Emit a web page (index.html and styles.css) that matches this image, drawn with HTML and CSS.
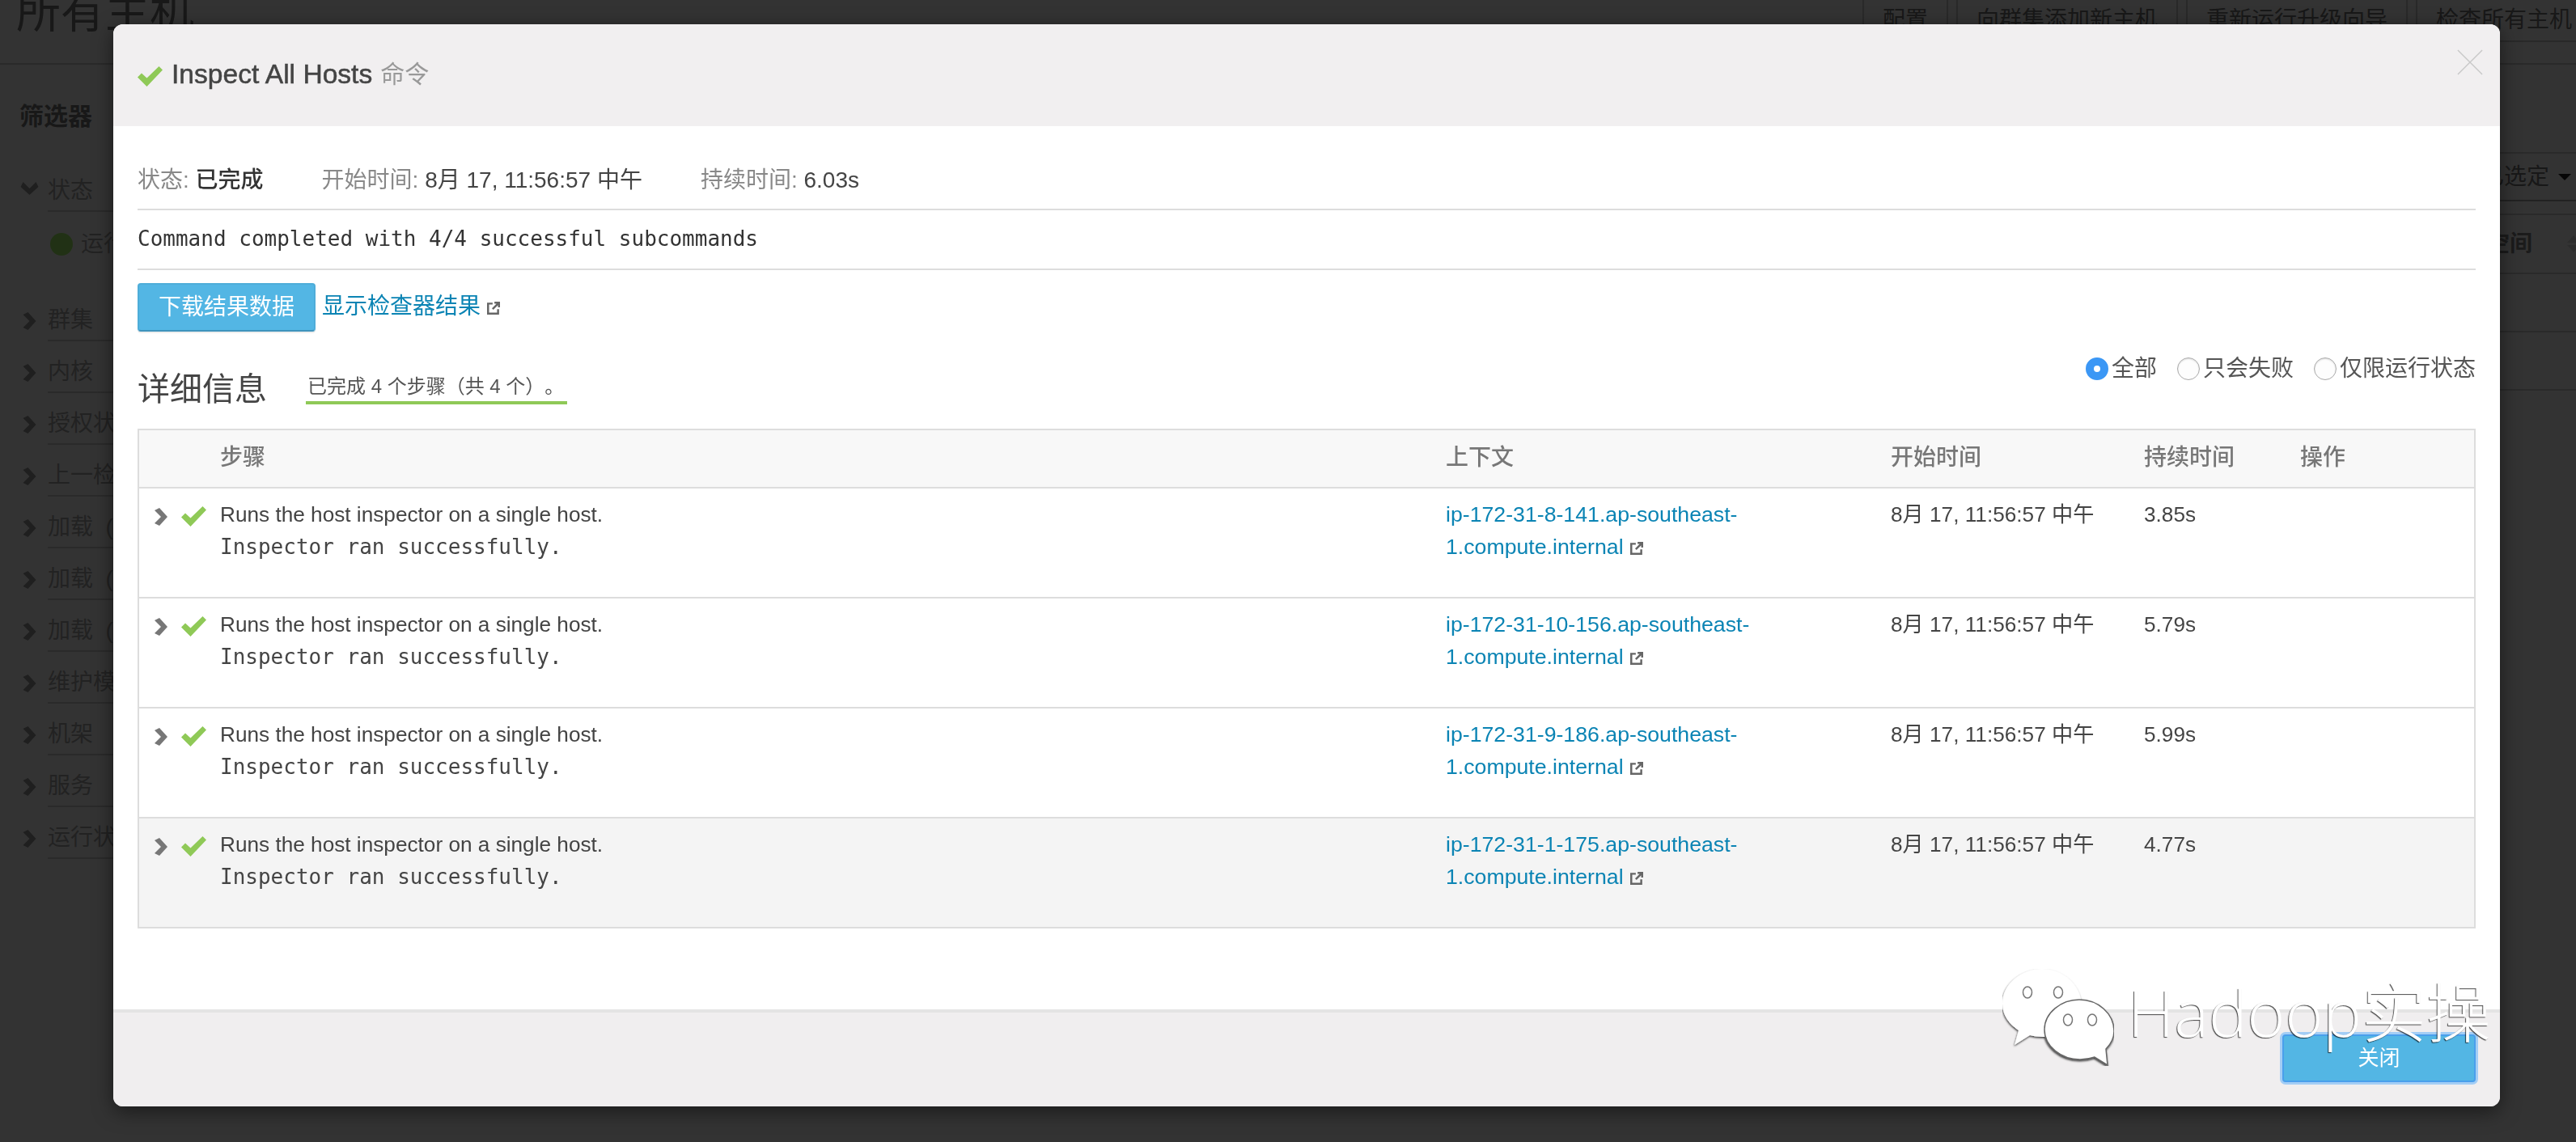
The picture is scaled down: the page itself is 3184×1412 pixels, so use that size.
FILE: index.html
```html
<!DOCTYPE html>
<html lang="zh">
<head>
<meta charset="utf-8">
<title>Inspect All Hosts</title>
<link rel="stylesheet" href="styles.css">
</head>
<body>
<div class="page">
  <header class="page-head">
    <h1 class="page-title">所有主机</h1>
    <nav class="page-actions">
      <span class="page-btn">配置</span>
      <span class="page-btn">向群集添加新主机</span>
      <span class="page-btn">重新运行升级向导</span>
      <span class="page-btn">检查所有主机</span>
    </nav>
  </header>
  <div class="page-body">
    <aside class="filters">
      <h2 class="filters-title">筛选器</h2>
      <div class="filter"><svg class="chev chev-down" viewBox="0 0 16 22"><path d="M0 3 L6 0 L16 11 L6 22 L0 19 L8 11 Z"/></svg><span class="filter-name">状态</span></div>
      <div class="filter-item"><span class="dot"></span>运行</div>
      <div class="filter"><svg class="chev" viewBox="0 0 16 22"><path d="M0 3 L6 0 L16 11 L6 22 L0 19 L8 11 Z"/></svg><span class="filter-name">群集</span></div>
      <div class="filter"><svg class="chev" viewBox="0 0 16 22"><path d="M0 3 L6 0 L16 11 L6 22 L0 19 L8 11 Z"/></svg><span class="filter-name">内核</span></div>
      <div class="filter"><svg class="chev" viewBox="0 0 16 22"><path d="M0 3 L6 0 L16 11 L6 22 L0 19 L8 11 Z"/></svg><span class="filter-name">授权状态</span></div>
      <div class="filter"><svg class="chev" viewBox="0 0 16 22"><path d="M0 3 L6 0 L16 11 L6 22 L0 19 L8 11 Z"/></svg><span class="filter-name">上一检查</span></div>
      <div class="filter"><svg class="chev" viewBox="0 0 16 22"><path d="M0 3 L6 0 L16 11 L6 22 L0 19 L8 11 Z"/></svg><span class="filter-name">加载&nbsp;&nbsp;(</span></div>
      <div class="filter"><svg class="chev" viewBox="0 0 16 22"><path d="M0 3 L6 0 L16 11 L6 22 L0 19 L8 11 Z"/></svg><span class="filter-name">加载&nbsp;&nbsp;(</span></div>
      <div class="filter"><svg class="chev" viewBox="0 0 16 22"><path d="M0 3 L6 0 L16 11 L6 22 L0 19 L8 11 Z"/></svg><span class="filter-name">加载&nbsp;&nbsp;(</span></div>
      <div class="filter"><svg class="chev" viewBox="0 0 16 22"><path d="M0 3 L6 0 L16 11 L6 22 L0 19 L8 11 Z"/></svg><span class="filter-name">维护模式</span></div>
      <div class="filter"><svg class="chev" viewBox="0 0 16 22"><path d="M0 3 L6 0 L16 11 L6 22 L0 19 L8 11 Z"/></svg><span class="filter-name">机架</span></div>
      <div class="filter"><svg class="chev" viewBox="0 0 16 22"><path d="M0 3 L6 0 L16 11 L6 22 L0 19 L8 11 Z"/></svg><span class="filter-name">服务</span></div>
      <div class="filter"><svg class="chev" viewBox="0 0 16 22"><path d="M0 3 L6 0 L16 11 L6 22 L0 19 L8 11 Z"/></svg><span class="filter-name">运行状况</span></div>
    </aside>
    <section class="host-side">
      <div class="host-tools">已选定<span class="caret"></span></div>
      <div class="host-cols">空间<span class="sort"><i class="sort-up"></i><i class="sort-down"></i></span></div>
      <div class="host-row"></div>
      <div class="host-row"></div>
      <div class="host-row"></div>
    </section>
  </div>
</div>

<div class="backdrop"></div>

<div class="modal">
  <div class="modal-head">
    <svg class="check check-title" viewBox="0 0 31 25"><path d="M0 13.5 L5 8.5 L11.5 14.5 L26.5 0 L31 4.5 L11.5 25 Z"/></svg>
    <span class="modal-title">Inspect All Hosts</span>
    <span class="modal-sub">命令</span>
    <svg class="modal-x" viewBox="0 0 34 34"><path d="M1 1 L33 33 M33 1 L1 33"/></svg>
  </div>
  <div class="modal-body">
    <div class="meta">
      <span class="meta-item"><span class="muted">状态:</span> <strong>已完成</strong></span>
      <span class="meta-item"><span class="muted">开始时间:</span> 8月 17, 11:56:57 中午</span>
      <span class="meta-item"><span class="muted">持续时间:</span> 6.03s</span>
    </div>
    <div class="result mono">Command completed with 4/4 successful subcommands</div>
    <div class="download">
      <span class="btn">下载结果数据</span>
      <a class="link link-big">显示检查器结果<svg class="ext" viewBox="0 0 16 16"><path d="M7 3 H2 V14 H13 V9 M9 2 H14 V7 M14 2 L7 9"/></svg></a>
    </div>
    <div class="details-bar">
      <h3 class="details-title">详细信息</h3>
      <span class="details-progress">已完成 4 个步骤（共 4 个）。</span>
      <div class="radios">
        <label class="radio"><span class="radio-dot radio-on"></span>全部</label>
        <label class="radio"><span class="radio-dot"></span>只会失败</label>
        <label class="radio"><span class="radio-dot"></span>仅限运行状态</label>
      </div>
    </div>
    <div class="steps">
      <div class="row row-head">
        <div class="c-icons"></div>
        <div class="c-step">步骤</div>
        <div class="c-ctx">上下文</div>
        <div class="c-start">开始时间</div>
        <div class="c-dur">持续时间</div>
        <div class="c-act">操作</div>
      </div>
      <div class="row">
        <div class="c-icons"><svg class="arrow" viewBox="0 0 16 22"><path d="M0 3 L6 0 L16 11 L6 22 L0 19 L8 11 Z"/></svg><svg class="check" viewBox="0 0 31 25"><path d="M0 13.5 L5 8.5 L11.5 14.5 L26.5 0 L31 4.5 L11.5 25 Z"/></svg></div>
        <div class="c-step"><div>Runs the host inspector on a single host.</div><div class="mono">Inspector ran successfully.</div></div>
        <div class="c-ctx"><a class="link">ip-172-31-8-141.ap-southeast-<br>1.compute.internal<svg class="ext" viewBox="0 0 16 16"><path d="M7 3 H2 V14 H13 V9 M9 2 H14 V7 M14 2 L7 9"/></svg></a></div>
        <div class="c-start">8月 17, 11:56:57 中午</div>
        <div class="c-dur">3.85s</div>
        <div class="c-act"></div>
      </div>
      <div class="row">
        <div class="c-icons"><svg class="arrow" viewBox="0 0 16 22"><path d="M0 3 L6 0 L16 11 L6 22 L0 19 L8 11 Z"/></svg><svg class="check" viewBox="0 0 31 25"><path d="M0 13.5 L5 8.5 L11.5 14.5 L26.5 0 L31 4.5 L11.5 25 Z"/></svg></div>
        <div class="c-step"><div>Runs the host inspector on a single host.</div><div class="mono">Inspector ran successfully.</div></div>
        <div class="c-ctx"><a class="link">ip-172-31-10-156.ap-southeast-<br>1.compute.internal<svg class="ext" viewBox="0 0 16 16"><path d="M7 3 H2 V14 H13 V9 M9 2 H14 V7 M14 2 L7 9"/></svg></a></div>
        <div class="c-start">8月 17, 11:56:57 中午</div>
        <div class="c-dur">5.79s</div>
        <div class="c-act"></div>
      </div>
      <div class="row">
        <div class="c-icons"><svg class="arrow" viewBox="0 0 16 22"><path d="M0 3 L6 0 L16 11 L6 22 L0 19 L8 11 Z"/></svg><svg class="check" viewBox="0 0 31 25"><path d="M0 13.5 L5 8.5 L11.5 14.5 L26.5 0 L31 4.5 L11.5 25 Z"/></svg></div>
        <div class="c-step"><div>Runs the host inspector on a single host.</div><div class="mono">Inspector ran successfully.</div></div>
        <div class="c-ctx"><a class="link">ip-172-31-9-186.ap-southeast-<br>1.compute.internal<svg class="ext" viewBox="0 0 16 16"><path d="M7 3 H2 V14 H13 V9 M9 2 H14 V7 M14 2 L7 9"/></svg></a></div>
        <div class="c-start">8月 17, 11:56:57 中午</div>
        <div class="c-dur">5.99s</div>
        <div class="c-act"></div>
      </div>
      <div class="row row-hover">
        <div class="c-icons"><svg class="arrow" viewBox="0 0 16 22"><path d="M0 3 L6 0 L16 11 L6 22 L0 19 L8 11 Z"/></svg><svg class="check" viewBox="0 0 31 25"><path d="M0 13.5 L5 8.5 L11.5 14.5 L26.5 0 L31 4.5 L11.5 25 Z"/></svg></div>
        <div class="c-step"><div>Runs the host inspector on a single host.</div><div class="mono">Inspector ran successfully.</div></div>
        <div class="c-ctx"><a class="link">ip-172-31-1-175.ap-southeast-<br>1.compute.internal<svg class="ext" viewBox="0 0 16 16"><path d="M7 3 H2 V14 H13 V9 M9 2 H14 V7 M14 2 L7 9"/></svg></a></div>
        <div class="c-start">8月 17, 11:56:57 中午</div>
        <div class="c-dur">4.77s</div>
        <div class="c-act"></div>
      </div>
    </div>
  </div>
  <div class="modal-foot"><span class="btn btn-close">关闭</span></div>
</div>

<div class="watermark">
  <svg class="wechat" viewBox="0 0 138 120">
    <defs><filter id="ws" x="-10%" y="-10%" width="120%" height="120%"><feDropShadow dx="-0.5" dy="1.5" stdDeviation="1.2" flood-color="#000" flood-opacity=".8"/></filter></defs>
    <g filter="url(#ws)" fill="#fff">
      <path d="M49 0 C75 0 98 20 98 46 C98 70 75 84 50 84 C44 84 38 83 34 82 L15 94 L20 76 C8 68 0 57 0 43 C0 18 24 0 49 0 Z"/>
      <ellipse class="eye" cx="31" cy="29" rx="5.5" ry="7"/><ellipse class="eye" cx="69" cy="29" rx="5.5" ry="7"/>
      <path d="M95 38 C118 38 138 55 138 77 C138 86 134 93 128 99 L130 119 L114 109 C108 111 102 112 96 112 C73 112 52 96 52 75 C52 54 73 38 95 38 Z" stroke="#666" stroke-width="1.5"/>
      <ellipse class="eye" cx="81" cy="63" rx="5.5" ry="7"/><ellipse class="eye" cx="111" cy="63" rx="5.5" ry="7"/>
    </g>
  </svg>
  <span class="wm-text">Hadoop实操</span>
</div>
</body>
</html>
```

FILE: styles.css
```css
* { box-sizing: border-box; }
html, body { margin: 0; height: 100%; }
body {
  width: 3184px;
  height: 1412px;
  overflow: hidden;
  position: relative;
  background: #fff;
  color: #444;
  font-family: "Liberation Sans", "Noto Sans CJK SC", sans-serif;
  font-size: 26.2px;
  line-height: 40px;
}
.mono { font-family: "DejaVu Sans Mono", "Liberation Mono", monospace; font-size: 26px; }
.muted { color: #888; }

/* page behind the dialog */
.page { height: 100%; display: flex; flex-direction: column; color: #aaa; font-size: 28px; overflow: hidden; }
.page-head {
  height: 80px;
  flex: none;
  display: flex;
  justify-content: space-between;
  border-bottom: 2px solid #d2d2d2;
  padding-left: 20px;
}
.page-title { margin: -20px 0 0; font-size: 55px; line-height: 70px; font-weight: 400; color: #777; }
.page-actions { display: flex; align-items: flex-start; height: 52px; margin-right: -20px; gap: 10px; flex: none; }
.page-btn {
  height: 52px;
  padding: 0 23px;
  line-height: 50px;
  border: 2px solid #ccc;
  border-top: 0;
  color: #777;
  white-space: nowrap;
}
.page-body { flex: 1; display: flex; justify-content: space-between; }
.filters { width: 300px; padding-left: 24px; }
.filters-title { margin: 44px 0 34px; font-size: 30px; line-height: 40px; font-weight: 700; color: #777; }
.filter { height: 64px; display: flex; align-items: flex-start; gap: 14px; padding-left: 4px; }
.filter-name {
  flex: 1;
  height: 64px;
  padding-top: 18px;
  line-height: 40px;
  border-bottom: 2px solid #d2d2d2;
  white-space: nowrap;
}
.chev { width: 17px; height: 22px; margin-top: 28px; fill: #999; flex: none; overflow: visible; }
.chev-down { transform: rotate(90deg); margin-top: 24px; }
.filter-item { height: 96px; display: flex; align-items: flex-start; gap: 10px; padding: 20px 0 0 38px; }
.dot { width: 28px; height: 28px; margin-top: 6px; border-radius: 50%; background: #a4f56a; flex: none; }
.host-side { width: 160px; padding-top: 108px; white-space: nowrap; }
.host-tools {
  height: 61px;
  line-height: 58px;
  border-top: 2px solid #d2d2d2;
  border-bottom: 2px solid #aaa;
  display: flex;
  justify-content: flex-end;
  align-items: center;
  gap: 11px;
  padding-right: 6px;
  color: #777;
}
.caret { width: 0; height: 0; border: 8px solid transparent; border-top: 8px solid #222; border-bottom: 0; }
.host-cols {
  height: 73px;
  margin-top: 15px;
  border-top: 2px solid #d2d2d2;
  display: flex;
  justify-content: flex-end;
  align-items: center;
  gap: 43px;
  font-weight: 700;
  color: #888;
}
.sort { width: 11px; display: flex; flex-direction: column; gap: 3px; }
.sort-up { width: 0; height: 0; border: 8px solid transparent; border-bottom: 9px solid #ddd; border-top: 0; }
.sort-down { width: 0; height: 0; border: 8px solid transparent; border-top: 9px solid #ddd; border-bottom: 0; }
.host-row { height: 72px; border-top: 2px solid #d2d2d2; }
.backdrop { position: fixed; inset: 0; background: rgba(0, 0, 0, .8); }

/* dialog */
.modal {
  position: absolute;
  left: 140px;
  top: 30px;
  width: 2950px;
  height: 1338px;
  background: #fff;
  border-radius: 12px;
  overflow: hidden;
  box-shadow: 0 6px 24px rgba(0, 0, 0, .5);
  display: flex;
  flex-direction: column;
}
.modal-head {
  height: 126px;
  flex: none;
  background: #f1eff0;
  display: flex;
  align-items: center;
  padding: 0 30px 2px;
  position: relative;
}
.check { width: 31px; height: 25px; fill: #8fc957; flex: none; }
.check-title { margin: 4px 11px 0 0; }
.modal-title { font-size: 33.6px; color: #444; -webkit-text-stroke: .5px #444; }
.modal-sub { font-size: 30px; color: #999; margin-left: 10px; }
.modal-x {
  position: absolute;
  right: 21px;
  top: 30px;
  width: 32px;
  height: 34px;
  fill: none;
  stroke: #c8c8c8;
  stroke-width: 1.5;
}
.modal-body { flex: 1; padding: 0 30px; }
.meta {
  height: 104px;
  padding-top: 47px;
  border-bottom: 2px solid #ddd;
  display: flex;
  gap: 72px;
  font-size: 28px;
}
.meta strong { color: #333; font-weight: 500; }
.result { height: 74px; line-height: 71px; border-bottom: 2px solid #ddd; color: #333; }
.download { margin-top: 16px; display: flex; align-items: center; gap: 8px; height: 60px; }
.btn {
  display: inline-block;
  background: #53b6e4;
  color: #fff;
  border: 2px solid #4fadd9;
  border-bottom-color: #3f93bc;
  border-radius: 4px;
  height: 60px;
  line-height: 56px;
  font-size: 28px;
  padding: 0 24px;
  box-shadow: 0 2px 0 #eee;
}
.link { color: #0b84b4; font-size: 26.7px; }
.link-big { font-size: 28px; margin-top: -2px; }
.ext { width: 18px; height: 18px; margin-left: 7px; fill: none; stroke: #666; stroke-width: 2.2; vertical-align: -2px; }
.details-bar { margin-top: 30px; height: 72px; display: flex; align-items: flex-start; }
.details-title { margin: 16px 0 0; font-size: 40px; font-weight: 400; color: #444; line-height: 50px; }
.details-progress {
  margin: 18px 0 0 48px;
  width: 323px;
  height: 42px;
  line-height: 40px;
  padding-left: 2px;
  border-bottom: 4px solid #8fc957;
  font-size: 24px;
  white-space: nowrap;
  text-spacing-trim: space-all;
  color: #555;
}
.radios { margin-left: auto; display: flex; gap: 25px; color: #555; font-size: 28px; line-height: 32px; }
.radio { display: flex; align-items: center; gap: 4px; }
.radio-dot {
  width: 28px;
  height: 28px;
  border-radius: 50%;
  border: 1.5px solid #aaa;
  background: #fdfdfd;
  box-shadow: inset 0 1px 2px rgba(0, 0, 0, .15);
}
.radio-on { border: 10px solid #3b97f5; background: #fff; box-shadow: none; }
.steps { margin-top: 18px; border: 2px solid #ddd; border-bottom: 0; }
.row { display: flex; height: 136px; border-bottom: 2px solid #ddd; padding-top: 12px; }
.row-head {
  height: 72px;
  padding-top: 0;
  line-height: 68px;
  background: #f8f8f8;
  color: #777;
  font-size: 28px;
  font-weight: 500;
}
.row-hover { background: #f4f4f4; }
.c-icons { width: 100px; flex: none; display: flex; align-items: flex-start; padding: 10px 0 0 19px; gap: 17px; }
.arrow { width: 16px; height: 22px; fill: #777; flex: none; margin-top: 2px; }
.c-step { width: 1515px; flex: none; }
.c-ctx { width: 550px; flex: none; }
.c-start { width: 313px; flex: none; }
.c-dur { width: 193px; flex: none; }
.c-act { flex: 1; }
.modal-foot {
  height: 120px;
  flex: none;
  background: #f0eeef;
  border-top: 4px solid #e4e4e4;
  display: flex;
  justify-content: flex-end;
  align-items: flex-start;
  padding: 27px 30px 0 0;
}
.btn-close {
  width: 239px;
  height: 59px;
  padding: 0;
  text-align: center;
  line-height: 55px;
  font-size: 26px;
  border: 2px solid #4a9fec;
  box-shadow: 0 0 0 3px #a3cdf5;
}

/* watermark over the dialog */
.watermark {
  position: absolute;
  left: 2475px;
  top: 1198px;
  display: flex;
  align-items: flex-start;
  gap: 17px;
  pointer-events: none;
}
.wechat { width: 138px; height: 120px; flex: none; }
.eye { fill: #fff; stroke: #777; stroke-width: 1.5; }
.wm-text {
  font-family: "Open Sans", "Noto Sans CJK SC", sans-serif;
  font-weight: 300;
  font-size: 80px;
  line-height: 90px;
  margin-top: 8px;
  color: #fff;
  white-space: nowrap;
  text-shadow: -1px 1px 1px rgba(0, 0, 0, .7);
}
```
